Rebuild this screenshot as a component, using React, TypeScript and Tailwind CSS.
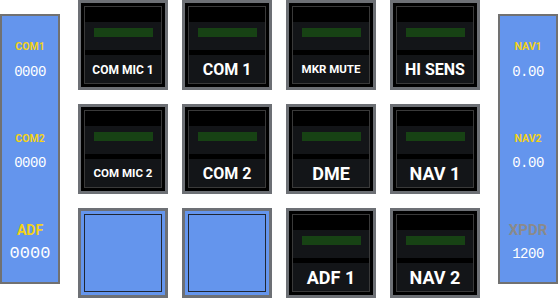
const buttons = [
  { label: 'COM MIC 1', size: 'text-[12px]' },
  { label: 'COM 1', size: 'text-[16px]' },
  { label: 'MKR MUTE', size: 'text-[11.5px]' },
  { label: 'HI SENS', size: 'text-[16px]' },
  { label: 'COM MIC 2', size: 'text-[11.5px]' },
  { label: 'COM 2', size: 'text-[16px]' },
  { label: 'DME', size: 'text-[18px]' },
  { label: 'NAV 1', size: 'text-[18px]' },
  { label: '', size: '' },
  { label: '', size: '' },
  { label: 'ADF 1', size: 'text-[18px]' },
  { label: 'NAV 2', size: 'text-[18px]' },
];

type ButtonProps = {
  label: string
  size: string
};

function PanelButton({ label, size }: ButtonProps) {
  if (!label) {
    return (
      <div className="w-[90px] h-[90px] border-[3px] border-[#6d7075] bg-[#6495ed] p-[3px]">
        <div className="w-full h-full border border-[#1f2632]" />
      </div>
    );
  }
  return (
    <div className="w-[90px] h-[90px] border-[3px] border-[#6d7075] bg-black p-[3px]">
      <div className="w-full h-full border border-[#3a3a3a] flex flex-col">
        <div className="h-[15px] shrink-0" />
        <div className="h-[28px] shrink-0 bg-[#131518] flex justify-center pt-[6px] pl-[1px]">
          <div className="w-[59px] h-[9px] bg-[#174214]" />
        </div>
        <div className="h-[5px] shrink-0" />
        <div className={`h-[28px] shrink-0 bg-[#131518] flex items-center justify-center text-white font-bold leading-none pt-[1px] ${size}`}>
          {label}
        </div>
      </div>
    </div>
  );
}

type ReadoutProps = {
  label: string
  value: string
  labelClass: string
  valueClass: string
};

function Readout({
  label, value, labelClass, valueClass,
}: ReadoutProps) {
  return (
    <div className="flex flex-col items-center">
      <div className={`font-bold ${labelClass}`}>{label}</div>
      <div className={`text-white font-['Liberation_Mono',monospace] ${valueClass}`}>{value}</div>
    </div>
  );
}

function SidePanel({ children }: { children: React.ReactNode }) {
  return (
    <div className="mt-[14px] w-[60px] h-[270px] border-2 border-[#717171] bg-[#6495ed] flex flex-col">
      {children}
    </div>
  );
}

export default function App() {
  return (
    <div className="w-[558px] h-[298px] bg-white flex font-['Roboto',sans-serif] overflow-hidden">
      <SidePanel>
        <div className="pt-[25px]">
          <Readout label="COM1" value="0000" labelClass="text-[10.5px] leading-[12px] text-[#f3d21a]" valueClass="text-[14px] leading-[14px] mt-[12px] tracking-[-0.5px]" />
        </div>
        <div className="mt-[54px]">
          <Readout label="COM2" value="0000" labelClass="text-[10.5px] leading-[12px] text-[#f3d21a]" valueClass="text-[14px] leading-[14px] mt-[11px] tracking-[-0.5px]" />
        </div>
        <div className="mt-[52px]">
          <Readout label="ADF" value="0000" labelClass="text-[14px] leading-[16px] text-[#f3d21a]" valueClass="text-[17px] leading-[16px] mt-[8px]" />
        </div>
      </SidePanel>

      <div className="ml-[18px] grid grid-cols-[repeat(4,90px)] grid-rows-[repeat(3,90px)] gap-[14px]">
        {buttons.map((b, i) => (
          <PanelButton key={i} label={b.label} size={b.size} />
        ))}
      </div>

      <div className="ml-[18px]">
        <SidePanel>
          <div className="pt-[25px]">
            <Readout label="NAV1" value="0.00" labelClass="text-[10.5px] leading-[12px] text-[#f3d21a]" valueClass="text-[14px] leading-[14px] mt-[12px] tracking-[-0.5px]" />
          </div>
          <div className="mt-[54px]">
            <Readout label="NAV2" value="0.00" labelClass="text-[10.5px] leading-[12px] text-[#f3d21a]" valueClass="text-[14px] leading-[14px] mt-[11px] tracking-[-0.5px]" />
          </div>
          <div className="mt-[52px]">
            <Readout label="XPDR" value="1200" labelClass="text-[15px] leading-[16px] text-[#8a8a8a]" valueClass="text-[14px] leading-[14px] mt-[9px] tracking-[-0.5px]" />
          </div>
        </SidePanel>
      </div>
    </div>
  );
}
